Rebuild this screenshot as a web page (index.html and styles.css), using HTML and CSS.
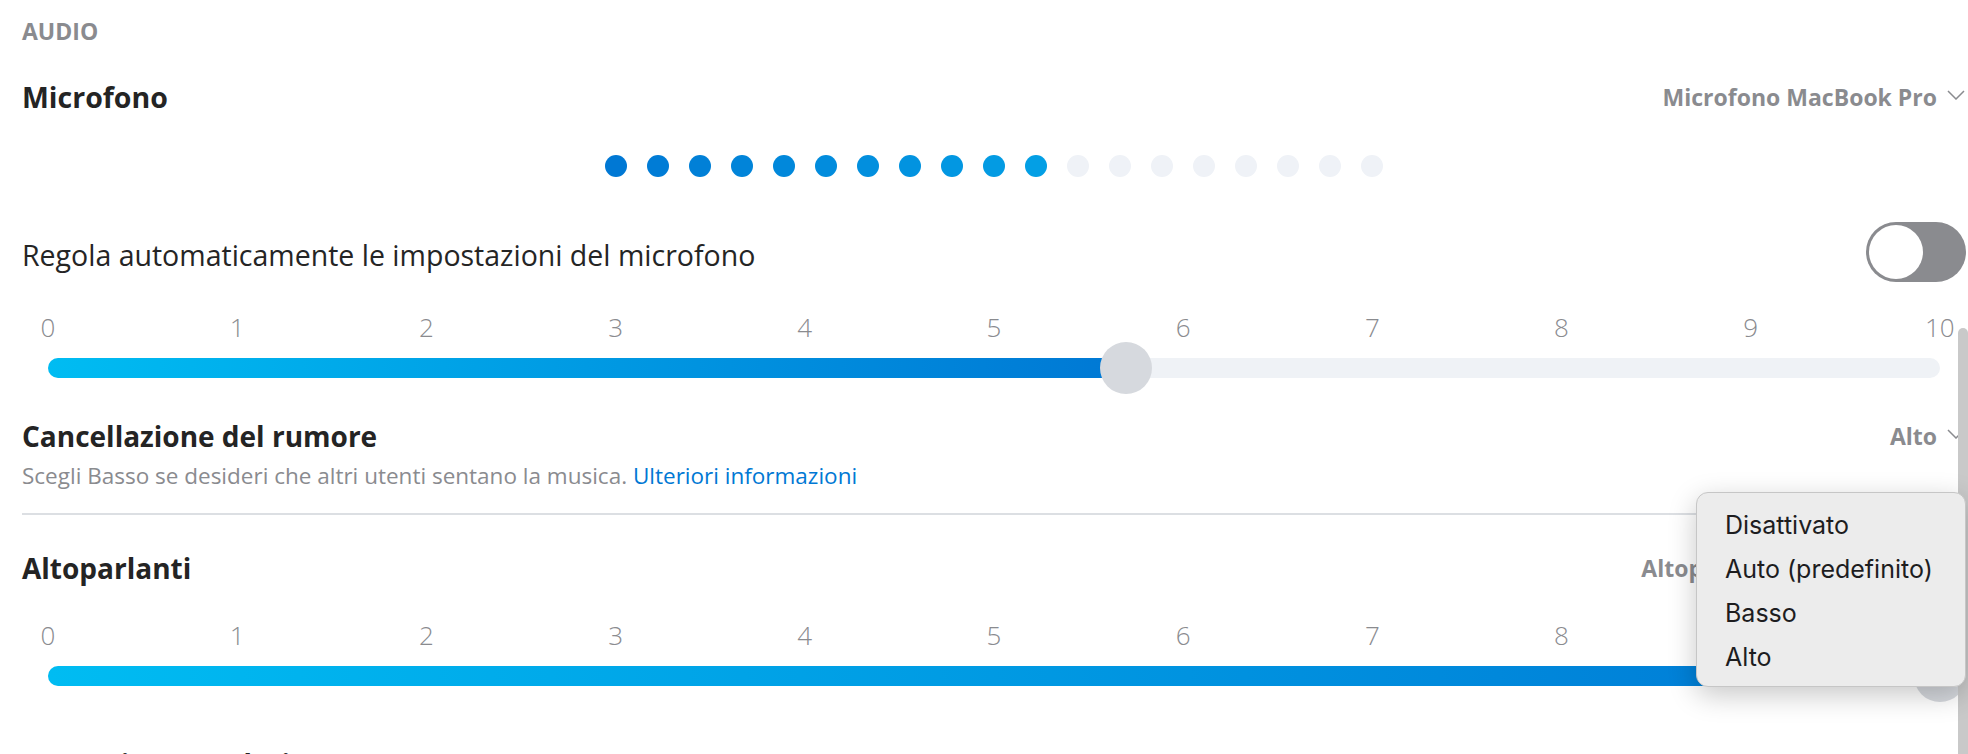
FILE: index.html
```html
<!DOCTYPE html>
<html lang="it">
<head>
<meta charset="utf-8">
<title>Audio</title>
<link rel="stylesheet" href="styles.css">
</head>
<body>
<div class="page">
  <div class="label">AUDIO</div>

  <div class="row mic-row">
    <h2 class="heading">Microfono</h2>
    <div class="select">Microfono MacBook Pro<svg class="chev" width="18" height="10" viewBox="0 0 18 10"><polyline points="1,1 9,9 17,1" fill="none" stroke="#8a8b8f" stroke-width="1.5"/></svg></div>
  </div>

  <div class="level">
    <span class="dot on"></span><span class="dot on"></span><span class="dot on"></span><span class="dot on"></span><span class="dot on"></span><span class="dot on"></span><span class="dot on"></span><span class="dot on"></span><span class="dot on"></span><span class="dot on"></span><span class="dot on"></span><span class="dot"></span><span class="dot"></span><span class="dot"></span><span class="dot"></span><span class="dot"></span><span class="dot"></span><span class="dot"></span><span class="dot"></span>
  </div>

  <div class="row toggle-row">
    <span class="option-text">Regola automaticamente le impostazioni del microfono</span>
    <span class="toggle"><span class="knob"></span></span>
  </div>

  <div class="slider mic-slider">
    <div class="ticks">
      <span class="tick">0</span><span class="tick">1</span><span class="tick">2</span><span class="tick">3</span><span class="tick">4</span><span class="tick">5</span><span class="tick">6</span><span class="tick">7</span><span class="tick">8</span><span class="tick">9</span><span class="tick">10</span>
    </div>
    <div class="track-area">
      <div class="track">
        <div class="fill" style="width:57%"></div>
        <div class="thumb" style="left:57%"></div>
      </div>
    </div>
  </div>

  <div class="row nc-row">
    <h2 class="heading">Cancellazione del rumore</h2>
    <div class="select">Alto<svg class="chev" width="18" height="10" viewBox="0 0 18 10"><polyline points="1,1 9,9 17,1" fill="none" stroke="#8a8b8f" stroke-width="1.5"/></svg></div>
  </div>
  <p class="desc">Scegli Basso se desideri che altri utenti sentano la musica. <a class="link" href="#">Ulteriori informazioni</a></p>

  <hr class="divider">

  <div class="row spk-row">
    <h2 class="heading">Altoparlanti</h2>
    <div class="select">Altoparlanti MacBook Pro<svg class="chev" width="18" height="10" viewBox="0 0 18 10"><polyline points="1,1 9,9 17,1" fill="none" stroke="#8a8b8f" stroke-width="1.5"/></svg></div>
  </div>

  <div class="slider spk-slider">
    <div class="ticks">
      <span class="tick">0</span><span class="tick">1</span><span class="tick">2</span><span class="tick">3</span><span class="tick">4</span><span class="tick">5</span><span class="tick">6</span><span class="tick">7</span><span class="tick">8</span><span class="tick">9</span><span class="tick">10</span>
    </div>
    <div class="track-area">
      <div class="track">
        <div class="fill" style="width:100%"></div>
        <div class="thumb" style="left:100%"></div>
      </div>
    </div>
  </div>

  <div class="row next-row">
    <h2 class="heading">Suoneria secondaria</h2>
  </div>
</div>

<div class="scrollbar"></div>

<div class="menu">
  <div class="menu-item">Disattivato</div>
  <div class="menu-item">Auto (predefinito)</div>
  <div class="menu-item">Basso</div>
  <div class="menu-item">Alto</div>
</div>
</body>
</html>
```

FILE: styles.css
```css
html, body {
  margin: 0;
  padding: 0;
  background: #ffffff;
}

body {
  position: relative;
  height: 754px;
  overflow: hidden;
  font-family: "Open Sans", "Noto Sans", sans-serif;
}

.page {
  padding: 16px 2px 0 22px;
}

.label {
  height: 30px;
  font-weight: 700;
  font-size: 23px;
  line-height: 30px;
  color: #8a8b8f;
}

.row {
  display: flex;
  justify-content: space-between;
  align-items: center;
}

.heading {
  margin: 0;
  font-weight: 700;
  font-size: 28px;
  line-height: 40px;
  color: #242424;
  white-space: nowrap;
}

.mic-row .heading {
  font-size: 28.5px;
}

.select {
  display: flex;
  align-items: center;
  gap: 10px;
  font-weight: 700;
  font-size: 23px;
  line-height: 40px;
  color: #8a8b8f;
  white-space: nowrap;
}

.chev {
  display: block;
  margin-right: 1px;
  margin-top: -4px;
}

.mic-row {
  margin-top: 31px;
  height: 40px;
}

.level {
  margin-top: 38px;
  height: 22px;
  padding: 0 26px;
  display: flex;
  justify-content: center;
  gap: 20px;
}

.dot {
  width: 22px;
  height: 22px;
  border-radius: 50%;
  background: #eff2f7;
}

.dot.on:nth-child(1) { background: #0078d4; }
.dot.on:nth-child(2) { background: #007cd6; }
.dot.on:nth-child(3) { background: #0180d7; }
.dot.on:nth-child(4) { background: #0184d9; }
.dot.on:nth-child(5) { background: #0188db; }
.dot.on:nth-child(6) { background: #028cdd; }
.dot.on:nth-child(7) { background: #028fde; }
.dot.on:nth-child(8) { background: #0293e0; }
.dot.on:nth-child(9) { background: #0297e2; }
.dot.on:nth-child(10) { background: #039be3; }
.dot.on:nth-child(11) { background: #039fe5; }

.toggle-row {
  margin-top: 45px;
  height: 60px;
}

.option-text {
  padding-top: 5px;
  font-weight: 400;
  font-size: 28.5px;
  line-height: 40px;
  color: #252525;
}

.toggle {
  box-sizing: border-box;
  width: 100px;
  height: 60px;
  border-radius: 30px;
  background: #8a8b8f;
  display: flex;
  align-items: center;
  padding: 0 3px;
}

.knob {
  width: 54px;
  height: 54px;
  border-radius: 50%;
  background: #ffffff;
}

.slider {
  margin-top: 30px;
}

.spk-slider {
  margin-top: 32px;
}

.ticks {
  display: flex;
  justify-content: space-between;
  margin: 0 26px;
  height: 30px;
  font-weight: 300;
  font-size: 26px;
  line-height: 30px;
  color: #8a8b8f;
}

.tick {
  width: 0;
  display: flex;
  justify-content: center;
  white-space: nowrap;
}

.track-area {
  height: 52px;
  margin: 0 26px;
  display: flex;
  align-items: center;
}

.track {
  position: relative;
  flex: 1;
  height: 20px;
  border-radius: 10px;
  background: #eff2f6;
}

.fill {
  height: 100%;
  border-radius: 10px;
  background: linear-gradient(90deg, #00bcf2 0%, #0078d4 100%);
}

.thumb {
  position: absolute;
  top: 50%;
  width: 52px;
  height: 52px;
  border-radius: 50%;
  background: #d6d9de;
  transform: translate(-50%, -50%);
}

.nc-row {
  margin-top: 24px;
  height: 36px;
}

.nc-row .heading,
.nc-row .select {
  line-height: 36px;
}

.desc {
  margin: 8px 0 0 0;
  font-weight: 400;
  font-size: 22.5px;
  line-height: 28px;
  color: #8a8b8f;
}

.link {
  color: #0078d4;
  text-decoration: none;
}

.divider {
  margin: 23px 0 0 0;
  border: 0;
  height: 2px;
  background: #dcdfe3;
}

.spk-row {
  margin-top: 33px;
  height: 40px;
}

.next-row {
  margin-top: 42px;
  height: 40px;
}

.scrollbar {
  position: absolute;
  right: 0;
  top: 328px;
  bottom: 0;
  width: 10px;
  border-radius: 5px 5px 0 0;
  background: #c9c9c9;
}

.menu {
  position: absolute;
  left: 1696px;
  top: 492px;
  box-sizing: border-box;
  width: 270px;
  height: 195px;
  padding: 10px 0 0 28px;
  border: 1px solid #c6c6c6;
  border-radius: 12px;
  background: #ececec;
  box-shadow: 0 8px 28px rgba(0, 0, 0, 0.22);
  font-family: Inter, "Noto Sans", sans-serif;
  font-size: 25px;
  line-height: 44px;
  color: #1d1d1f;
}

.menu-item {
  height: 44px;
  white-space: nowrap;
}
```
